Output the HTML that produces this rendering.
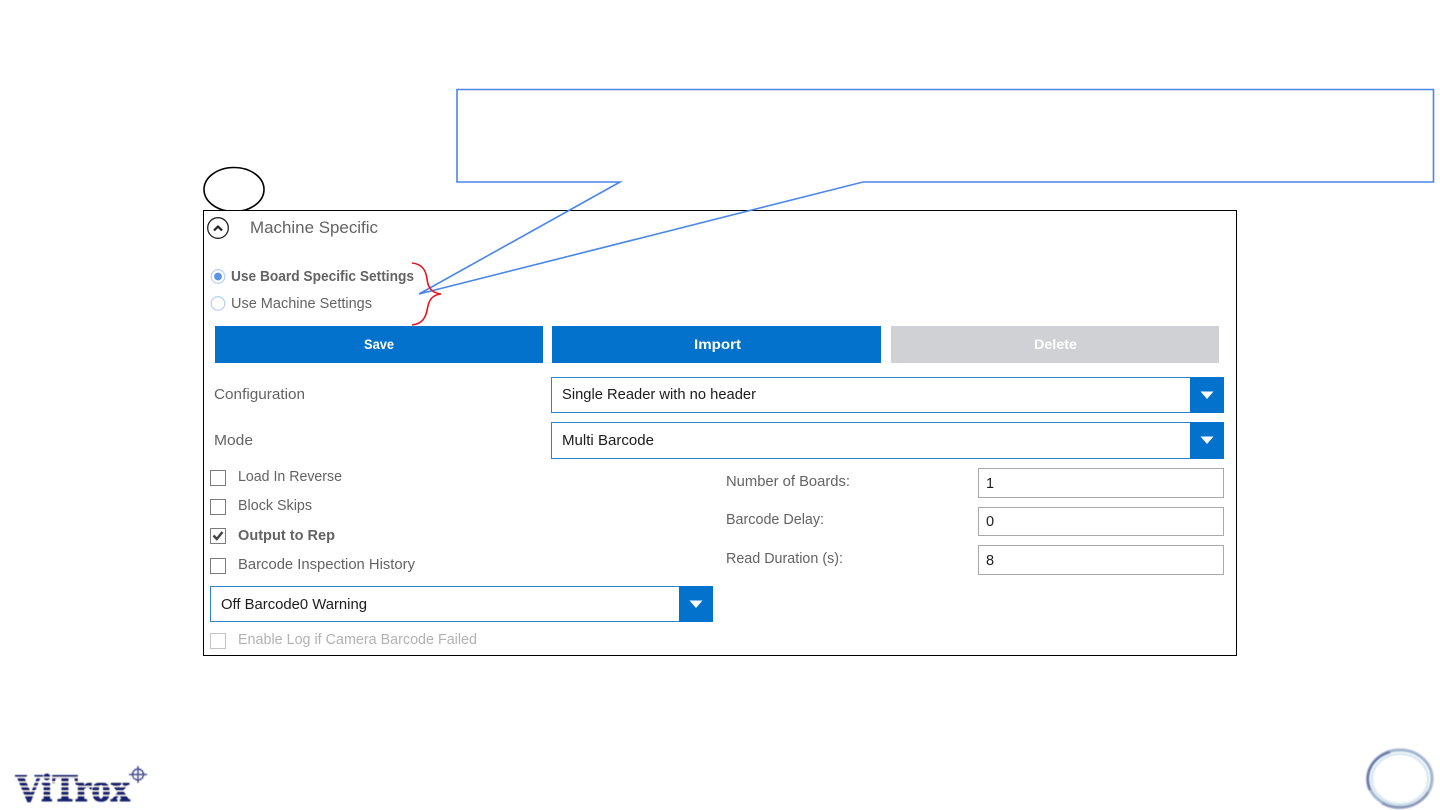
<!DOCTYPE html>
<html><head><meta charset="utf-8"><style>
html,body{margin:0;padding:0;background:#fff;width:1440px;height:810px;overflow:hidden}
svg{display:block;position:absolute;left:0;top:0}
text{font-family:"Liberation Sans",sans-serif;font-size:14.5px;fill:#636363}
.d{fill:#1c1c1c}
.b{font-weight:bold}
.w{fill:#fff;font-weight:bold;font-size:13.5px}
</style></head><body>
<svg width="1440" height="810" viewBox="0 0 1440 810" xmlns="http://www.w3.org/2000/svg">
<defs><filter id="bl" x="-10%" y="-10%" width="120%" height="120%"><feGaussianBlur stdDeviation="0.4"/></filter>
<filter id="bl2" x="-10%" y="-10%" width="120%" height="120%"><feGaussianBlur stdDeviation="0.8"/></filter></defs>

<!-- black ellipse -->
<ellipse cx="234" cy="189.5" rx="30" ry="22" fill="#fff" stroke="#000" stroke-width="1.6"/>
<!-- panel -->
<rect x="203.5" y="210.5" width="1033" height="445" fill="#fff" stroke="#000" stroke-width="1"/>
<!-- collapse icon -->
<circle cx="218" cy="228" r="10.3" fill="#fff" stroke="#222" stroke-width="1.3"/>
<path d="M214 230.5 L218 226.5 L222 230.5" fill="none" stroke="#222" stroke-width="2.2"/>
<text x="250" y="233" style="font-size:16.5px" textLength="128" lengthAdjust="spacingAndGlyphs">Machine Specific</text>

<!-- radios -->
<circle cx="218" cy="276.5" r="6.8" fill="#fff" stroke="#bcd3ee" stroke-width="1.3"/>
<circle cx="218" cy="276.5" r="3.9" fill="#5b93e6"/>
<text x="231" y="281" class="b" textLength="183" lengthAdjust="spacingAndGlyphs">Use Board Specific Settings</text>
<circle cx="218" cy="303.5" r="6.8" fill="#fff" stroke="#bcd3ee" stroke-width="1.3"/>
<text x="231" y="308" textLength="141" lengthAdjust="spacingAndGlyphs">Use Machine Settings</text>

<!-- buttons -->
<rect x="215" y="326" width="328" height="37" fill="#0272cc"/>
<rect x="552" y="326" width="329" height="37" fill="#0272cc"/>
<rect x="891" y="326" width="328" height="37" fill="#d0d1d4"/>
<text x="364" y="349" class="w" textLength="30" lengthAdjust="spacingAndGlyphs">Save</text>
<text x="694" y="349" class="w" textLength="47" lengthAdjust="spacingAndGlyphs">Import</text>
<text x="1034" y="349" class="w" textLength="43" lengthAdjust="spacingAndGlyphs">Delete</text>

<!-- config -->
<text x="214" y="399" textLength="91" lengthAdjust="spacingAndGlyphs">Configuration</text>
<rect x="551.5" y="377.5" width="672" height="35" fill="#fff" stroke="#2b83cd" stroke-width="1"/>
<rect x="1190" y="377" width="34" height="36" fill="#0272cc"/>
<path d="M1200.5 391.5 H1213.5 L1207 399 Z" fill="#fff"/>
<text x="562" y="399" class="d" textLength="194" lengthAdjust="spacingAndGlyphs">Single Reader with no header</text>

<text x="214" y="445" textLength="39" lengthAdjust="spacingAndGlyphs">Mode</text>
<rect x="551.5" y="422.5" width="672" height="36" fill="#fff" stroke="#2b83cd" stroke-width="1"/>
<rect x="1190" y="422" width="34" height="37" fill="#0272cc"/>
<path d="M1200.5 436.5 H1213.5 L1207 444 Z" fill="#fff"/>
<text x="562" y="445" class="d" textLength="92" lengthAdjust="spacingAndGlyphs">Multi Barcode</text>

<!-- checkboxes -->
<rect x="210.5" y="470.5" width="15" height="15" fill="#fff" stroke="#7b7b7b" stroke-width="1"/>
<text x="238" y="481" textLength="104" lengthAdjust="spacingAndGlyphs">Load In Reverse</text>
<rect x="210.5" y="499.5" width="15" height="15" fill="#fff" stroke="#7b7b7b" stroke-width="1"/>
<text x="238" y="510" textLength="74" lengthAdjust="spacingAndGlyphs">Block Skips</text>
<rect x="210.5" y="528.5" width="15" height="15" fill="#fff" stroke="#7b7b7b" stroke-width="1"/>
<path d="M213.5 535.5 L216.8 539 L222.5 532" fill="none" stroke="#444" stroke-width="2.4"/>
<text x="238" y="540" class="b" textLength="97" lengthAdjust="spacingAndGlyphs">Output to Rep</text>
<rect x="210.5" y="558.5" width="15" height="15" fill="#fff" stroke="#7b7b7b" stroke-width="1"/>
<text x="238" y="569" textLength="177" lengthAdjust="spacingAndGlyphs">Barcode Inspection History</text>

<rect x="210.5" y="586.5" width="502" height="35" fill="#fff" stroke="#2b83cd" stroke-width="1"/>
<rect x="679" y="586" width="34" height="36" fill="#0272cc"/>
<path d="M689.5 600.5 H702.5 L696 608 Z" fill="#fff"/>
<text x="221" y="609" class="d" textLength="146" lengthAdjust="spacingAndGlyphs">Off Barcode0 Warning</text>

<rect x="210.5" y="633.5" width="15" height="15" fill="#fff" stroke="#c4c4c4" stroke-width="1"/>
<text x="238" y="644" style="fill:#b2b2b2" textLength="239" lengthAdjust="spacingAndGlyphs">Enable Log if Camera Barcode Failed</text>

<!-- right fields -->
<text x="726" y="486" textLength="124" lengthAdjust="spacingAndGlyphs">Number of Boards:</text>
<text x="726" y="524" textLength="98" lengthAdjust="spacingAndGlyphs">Barcode Delay:</text>
<text x="726" y="563" textLength="117" lengthAdjust="spacingAndGlyphs">Read Duration (s):</text>
<rect x="978.5" y="468.5" width="245" height="29" fill="#fff" stroke="#a8a8a8" stroke-width="1"/>
<rect x="978.5" y="507.5" width="245" height="28" fill="#fff" stroke="#a8a8a8" stroke-width="1"/>
<rect x="978.5" y="545.5" width="245" height="29" fill="#fff" stroke="#a8a8a8" stroke-width="1"/>
<text x="986" y="488" class="d">1</text>
<text x="986" y="526" class="d">0</text>
<text x="986" y="565" class="d">8</text>

<!-- callout -->
<path d="M457 89.5 H1433.5 V182 H863 L419 294 L620 182 H457 Z" fill="none" stroke="#4a86e8" stroke-width="1.6" stroke-linejoin="miter"/>

<!-- red brace -->
<path d="M412 263 C422 264 426 270 427 279 C428 288 432 293 441 294 C432 295 429 300 427.5 308 C426 318 422 324 412 325" fill="none" stroke="#e8141c" stroke-width="1.6"/>

<!-- logo -->
<g filter="url(#bl)">
<text x="15" y="801" textLength="115" lengthAdjust="spacingAndGlyphs" style="font-family:'Liberation Serif',serif;font-weight:bold;font-size:39px;fill:#16206e;stroke:#16206e;stroke-width:1.1px">ViTrox</text>
<g stroke="#fff" stroke-width="0.9">
<path d="M12 777.5 H135 M12 782 H135 M12 786.5 H135 M12 791 H135 M12 795.5 H135"/>
</g>
<circle cx="138" cy="774.5" r="5.5" fill="none" stroke="#4a4f8f" stroke-width="1.5"/>
<path d="M138 766 V783 M129 774.5 H147" stroke="#4a4f8f" stroke-width="1.5"/>
</g>

<!-- ring -->
<g filter="url(#bl2)">
<ellipse cx="1400" cy="778.5" rx="32" ry="28.5" fill="none" stroke="#9fb3cf" stroke-width="3"/>
<path d="M1370 790 A32 28.5 0 0 1 1390 752" fill="none" stroke="#6474a6" stroke-width="2.6"/>
<path d="M1382 803 A32 28.5 0 0 0 1428 792" fill="none" stroke="#8795b4" stroke-width="2.6"/>
<ellipse cx="1400" cy="779" rx="28" ry="25" fill="#fff" stroke="#cfe4ee" stroke-width="2"/>
</g>
</svg>
</body></html>
